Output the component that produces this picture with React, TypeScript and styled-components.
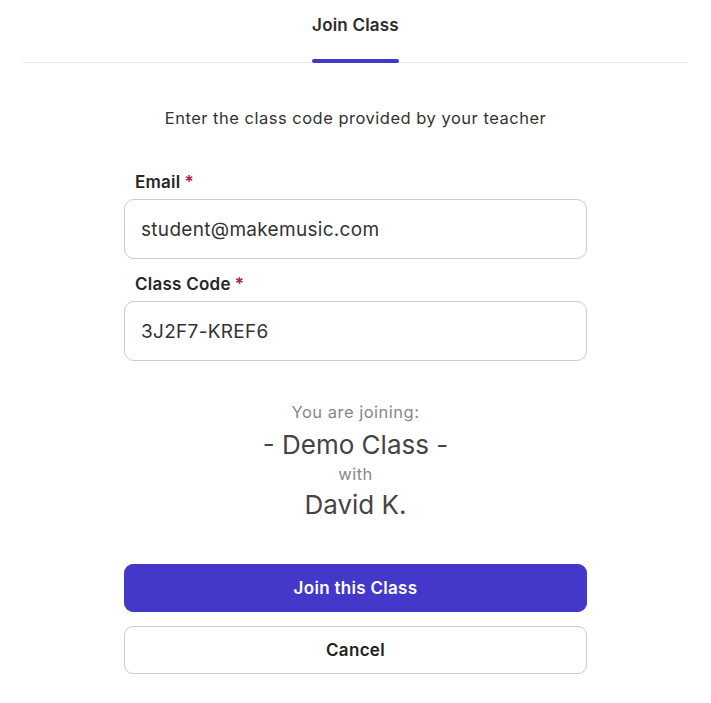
import React, { useState } from 'react';
import styled, { createGlobalStyle } from 'styled-components';

const GlobalStyle = createGlobalStyle`
  body {
    margin: 0;
    background: #ffffff;
    font-family: Inter, "Noto Sans", Arial, sans-serif;
    color: #333333;
  }
`;

const Page = styled.div`
  display: flex;
  flex-direction: column;
  align-items: stretch;
`;

const TabBar = styled.div`
  display: flex;
  justify-content: center;
  margin: 0 23px;
  border-bottom: 1px solid #e6e6e6;
`;

const Tab = styled.div`
  display: flex;
  flex-direction: column;
  align-items: stretch;
  padding-top: 15px;
  margin-bottom: -1px;
`;

const TabLabel = styled.div`
  font-size: 17px;
  line-height: 20px;
  font-weight: 600;
  letter-spacing: 0.2px;
  color: #2b2b2b;
  text-align: center;
`;

const TabIndicator = styled.div`
  height: 4px;
  margin-top: 24px;
  border-radius: 2px;
  background: #4438ca;
`;

const Subtitle = styled.p`
  margin: 43px 0 0;
  font-size: 16.5px;
  line-height: 24px;
  letter-spacing: 0.5px;
  text-align: center;
  color: #333333;
`;

const Form = styled.form`
  width: 463px;
  margin: 40px auto 0;
  display: flex;
  flex-direction: column;
`;

const Field = styled.div<{ $first?: boolean }>`
  display: flex;
  flex-direction: column;
  margin-top: ${p => (p.$first ? '0' : '13px')};
`;

const Label = styled.label`
  font-size: 17px;
  line-height: 24px;
  font-weight: 600;
  letter-spacing: 0.25px;
  color: #262626;
  padding-left: 11px;
  margin-bottom: 5px;
`;

const Required = styled.span`
  color: #b3184b;
  margin-left: 4px;
`;

const Input = styled.input`
  box-sizing: border-box;
  height: 60px;
  padding: 0 16px;
  border: 1px solid #cccccc;
  border-radius: 10px;
  font-family: inherit;
  font-size: 19px;
  letter-spacing: 0.3px;
  color: #333333;
  background: #ffffff;
  outline: none;
`;

const Summary = styled.div`
  margin-top: 39px;
  display: flex;
  flex-direction: column;
  align-items: center;
`;

const SmallNote = styled.div`
  font-size: 16.5px;
  line-height: 24px;
  letter-spacing: 0.5px;
  color: #888888;
`;

const BigLine = styled.div<{ $shift?: number }>`
  font-size: 26px;
  line-height: 34px;
  color: #444444;
  margin: ${p => (p.$shift ? `${p.$shift}px 0 0` : '2px 0')};
`;

const Actions = styled.div`
  margin-top: 42px;
  display: flex;
  flex-direction: column;
  gap: 14px;
`;

const Button = styled.button<{ $primary?: boolean }>`
  box-sizing: border-box;
  height: 48px;
  border-radius: 9px;
  font-family: inherit;
  font-size: 17px;
  font-weight: 600;
  letter-spacing: 0.3px;
  cursor: pointer;
  border: 1px solid ${p => (p.$primary ? '#4438ca' : '#cccccc')};
  background: ${p => (p.$primary ? '#4438ca' : '#ffffff')};
  color: ${p => (p.$primary ? '#ffffff' : '#222222')};
`;

const App: React.FC = () => {
  const [email, setEmail] = useState('student@makemusic.com');
  const [code, setCode] = useState('3J2F7-KREF6');

  return (
    <>
      <GlobalStyle />
      <Page>
        <TabBar>
          <Tab>
            <TabLabel>Join Class</TabLabel>
            <TabIndicator />
          </Tab>
        </TabBar>

        <Subtitle>Enter the class code provided by your teacher</Subtitle>

        <Form onSubmit={e => e.preventDefault()}>
          <Field $first>
            <Label htmlFor="email">
              Email<Required>*</Required>
            </Label>
            <Input id="email" value={email} onChange={e => setEmail(e.target.value)} />
          </Field>
          <Field>
            <Label htmlFor="code">
              Class Code<Required>*</Required>
            </Label>
            <Input id="code" value={code} onChange={e => setCode(e.target.value)} />
          </Field>

          <Summary>
            <SmallNote>You are joining:</SmallNote>
            <BigLine $shift={4}>- Demo Class -</BigLine>
            <SmallNote>with</SmallNote>
            <BigLine $shift={2}>David K.</BigLine>
          </Summary>

          <Actions>
            <Button type="submit" $primary>Join this Class</Button>
            <Button type="button">Cancel</Button>
          </Actions>
        </Form>
      </Page>
    </>
  );
};

export default App;
